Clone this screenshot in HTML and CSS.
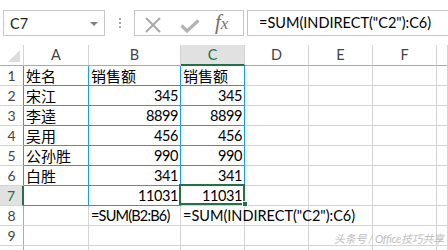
FILE: index.html
```html
<!DOCTYPE html>
<html>
<head>
<meta charset="utf-8">
<link rel="stylesheet" href="styles.css">
</head>
<body>
<div class="fbar">
  <div class="namebox"><span>C7</span><span class="dd"></span></div>
  <div class="dots"><i></i><i></i><i></i></div>
  <div class="btns">
    <svg class="ico-x" width="18" height="16" viewBox="0 0 18 16"><path d="M2 1 L16 15 M16 1 L2 15" stroke="#a9a9a9" stroke-width="2" fill="none"/></svg>
    <svg class="ico-ok" width="20" height="14" viewBox="0 0 20 14"><path d="M1.5 6.5 L7 12 L18.5 1.5" stroke="#b3b3b3" stroke-width="3.2" fill="none"/></svg>
    <span class="fx">f<span class="fxx">x</span></span>
  </div>
  <div class="finput">=SUM(INDIRECT("C2"):C6)</div>
</div>
<div class="sheet">
  <div class="hd corner"><span class="tri"></span></div>
  <div class="hd">A</div><div class="hd">B</div><div class="hd sel">C</div><div class="hd">D</div><div class="hd">E</div><div class="hd">F</div><div class="hd"></div>

  <div class="rh blr">1</div><div class="c bl cj">姓名</div><div class="c bl cj">销售额</div><div class="c bl cj">销售额</div><div class="c"></div><div class="c"></div><div class="c"></div><div class="c"></div>
  <div class="rh blr">2</div><div class="c bl cj">宋江</div><div class="c bl n">345</div><div class="c bl n">345</div><div class="c"></div><div class="c"></div><div class="c"></div><div class="c"></div>
  <div class="rh blr">3</div><div class="c bl cj">李逵</div><div class="c bl n">8899</div><div class="c bl n">8899</div><div class="c"></div><div class="c"></div><div class="c"></div><div class="c"></div>
  <div class="rh blr">4</div><div class="c bl cj">吴用</div><div class="c bl n">456</div><div class="c bl n">456</div><div class="c"></div><div class="c"></div><div class="c"></div><div class="c"></div>
  <div class="rh blr">5</div><div class="c bl cj">公孙胜</div><div class="c bl n">990</div><div class="c bl n">990</div><div class="c"></div><div class="c"></div><div class="c"></div><div class="c"></div>
  <div class="rh blr">6</div><div class="c bl cj">白胜</div><div class="c bl n">341</div><div class="c bl n">341</div><div class="c"></div><div class="c"></div><div class="c"></div><div class="c"></div>
  <div class="rh rsel">7</div><div class="c bl"></div><div class="c bl n">11031</div><div class="c n active">11031<span class="handle"></span></div><div class="c"></div><div class="c"></div><div class="c"></div><div class="c"></div>
  <div class="rh">8</div><div class="c"></div><div class="c fb">=SUM(B2:B6)</div><div class="c over">=SUM(INDIRECT("C2"):C6)</div><div class="c"></div><div class="c"></div><div class="c"></div><div class="c"></div>
  <div class="rh">9</div><div class="c"></div><div class="c"></div><div class="c"></div><div class="c"></div><div class="c"></div><div class="c"></div><div class="c"></div>
  <div class="rh last"></div><div class="c last"></div><div class="c last"></div><div class="c last"></div><div class="c last"></div><div class="c last"></div><div class="c last"></div><div class="c last"></div>
</div>
<div class="wm">头条号 / Office技巧共享</div>
</body>
</html>
```
FILE: styles.css
```css
html, body {
  margin: 0;
  padding: 0;
  background: #fff;
}
body {
  width: 448px;
  height: 250px;
  overflow: hidden;
  position: relative;
  font-family: "Lato", "Noto Sans CJK SC", sans-serif;
  font-size: 14.5px;
  color: #000;
}
.fbar {
  display: flex;
  align-items: flex-start;
  height: 45px;
  box-sizing: border-box;
  padding: 10px 0 0 3px;
}
.namebox {
  width: 102px;
  height: 26px;
  box-sizing: border-box;
  border: 1px solid #c6c6c6;
  display: flex;
  align-items: center;
  justify-content: space-between;
  padding: 0 6px 0 6px;
  color: #222;
}
.dd {
  width: 0;
  height: 0;
  border-left: 4px solid transparent;
  border-right: 4px solid transparent;
  border-top: 4px solid #808080;
  margin-top: 1px;
}
.dots {
  display: flex;
  flex-direction: column;
  gap: 2px;
  margin: 8px 13px 0 14px;
}
.dots i {
  display: block;
  width: 2px;
  height: 2px;
  background: #a6a6a6;
}
.btns {
  width: 110px;
  height: 26px;
  box-sizing: border-box;
  border: 1px solid #c6c6c6;
  display: flex;
  align-items: center;
  position: relative;
}
.ico-x { margin-left: 9px; margin-top: 3px; }
.ico-ok { margin-left: 18px; margin-top: 5px; }
.fx {
  margin-left: 15px;
  font-family: "Liberation Serif", serif;
  font-style: italic;
  font-size: 21px;
  color: #707070;
  line-height: 1;
  margin-top: -2px;
}
.fxx { font-size: 17px; }
.finput {
  flex: 1;
  margin-left: 3px;
  margin-right: -10px;
  height: 26px;
  box-sizing: border-box;
  border: 1px solid #c6c6c6;
  padding-left: 11px;
  line-height: 24px;
  white-space: nowrap;
}
.sheet {
  display: grid;
  grid-template-columns: 24px 65px 92px 64px 64px 64px 64px 1fr;
  grid-template-rows: 21px repeat(9, 20px) 5px;
}
.sheet > div {
  box-sizing: border-box;
  border-right: 1px solid #d4d4d4;
  border-bottom: 1px solid #d4d4d4;
  white-space: nowrap;
}
.sheet > .last { border-bottom: 0; }
.sheet > .hd {
  border-bottom-color: #ababab;
  color: #444;
  text-align: center;
  line-height: 20px;
}
.corner {
  position: relative;
}
.tri {
  position: absolute;
  left: 8px;
  top: 5px;
  width: 0;
  height: 0;
  border-left: 12px solid transparent;
  border-bottom: 12px solid #dcdcdc;
}
.sheet > .hd.sel {
  background: #e1e1e1;
  color: #217346;
  border-bottom: 2px solid #217346;
  line-height: 19px;
}
.sheet > .rh {
  border-right-color: #ababab;
  color: #444;
  text-align: center;
  line-height: 20px;
  font-size: 14px;
}
.sheet > .rh.blr { border-right-color: #1a9fe0; }
.sheet > .rh.rsel {
  background: #e1e1e1;
  color: #217346;
  border-right: 2px solid #217346;
}
.sheet > .c {
  padding: 0 2px 0 2px;
  line-height: 20px;
  overflow: visible;
}
.sheet > .bl {
  border-right-color: #1a9fe0;
  border-bottom-color: #1a9fe0;
}
.cj {
  font-size: 15px;
  line-height: 19px;
}
.n {
  text-align: right;
  letter-spacing: -0.4px;
}
.fb { letter-spacing: -0.8px; }
.over {
  position: relative;
  z-index: 2;
}
.active {
  position: relative;
}
.active::after {
  content: "";
  position: absolute;
  left: -2px;
  right: -1px;
  top: -2px;
  bottom: 0;
  border: 2px solid #217346;
  pointer-events: none;
}
.handle {
  position: absolute;
  left: 61px;
  top: 15px;
  width: 6px;
  height: 6px;
  box-sizing: border-box;
  background: #217346;
  border: 1px solid #fff;
  z-index: 3;
}
.wm {
  position: absolute;
  left: 334px;
  top: 232px;
  font-size: 11px;
  line-height: 14px;
  color: #bdbdbd;
  font-style: italic;
  letter-spacing: -0.3px;
  z-index: 5;
}
```
